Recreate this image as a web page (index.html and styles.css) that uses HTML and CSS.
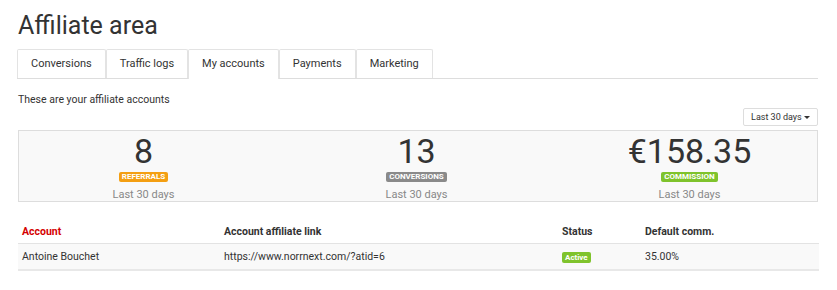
FILE: index.html
```html
<!DOCTYPE html>
<html lang="en">
<head>
  <meta charset="UTF-8">
  <title>Affiliate area</title>
  <link rel="stylesheet" href="styles.css">
</head>
<body>

  <!-- Page header -->
  <h1 class="page-title">Affiliate area</h1>

  <!-- Tabs -->
  <ul class="tabs">
    <li class="tab">Conversions</li>
    <li class="tab">Traffic logs</li>
    <li class="tab active">My accounts</li>
    <li class="tab">Payments</li>
    <li class="tab">Marketing</li>
  </ul>

  <p class="intro">These are your affiliate accounts</p>

  <div class="toolbar">
    <button class="range-btn">Last 30 days <span class="caret"></span></button>
  </div>

  <!-- Stats -->
  <div class="stats">
    <div class="stats-row">
      <div class="stat">
        <div class="stat-value">8</div>
        <span class="badge badge-orange">Referrals</span>
        <div class="stat-period">Last 30 days</div>
      </div>
      <div class="stat">
        <div class="stat-value">13</div>
        <span class="badge badge-grey">Conversions</span>
        <div class="stat-period">Last 30 days</div>
      </div>
      <div class="stat">
        <div class="stat-value">€158.35</div>
        <span class="badge badge-green">Commission</span>
        <div class="stat-period">Last 30 days</div>
      </div>
    </div>
  </div>

  <!-- Accounts -->
  <table class="accounts">
    <thead>
      <tr>
        <th class="col-account sorted">Account</th>
        <th class="col-link">Account affiliate link</th>
        <th class="col-status">Status</th>
        <th>Default comm.</th>
      </tr>
    </thead>
    <tbody>
      <tr>
        <td>Antoine Bouchet</td>
        <td>https://www.norrnext.com/?atid=6</td>
        <td><span class="label-active">Active</span></td>
        <td>35.00%</td>
      </tr>
    </tbody>
  </table>

</body>
</html>
```

FILE: styles.css
```css
/* Page base */
body {
  margin: 0;
  padding: 0 19px 0 17px;
  font-family: Roboto, "Liberation Sans", Arial, sans-serif;
  color: #333;
  background: #fff;
}

.page-title {
  margin: 0;
  padding: 9px 0 0 1px;
  font-size: 25px;
  font-weight: 400;
  line-height: 34px;
  color: #333;
}

/* Tabs */
.tabs {
  list-style: none;
  margin: 6px 0 0;
  padding: 0;
  display: flex;
  border-bottom: 1px solid #ddd;
}

.tab {
  height: 28px;
  line-height: 28px;
  padding: 0 13px;
  font-size: 11px;
  border: 1px solid #e3e3e3;
  border-bottom: none;
  margin-bottom: -1px;
  background: #fff;
  border-radius: 2px 2px 0 0;
}

.tab.active {
  height: 29px;
  padding: 0 13px;
}

.intro {
  margin: 14px 0 0 1px;
  font-size: 10.5px;
  line-height: 14px;
}

/* Date range button */
.toolbar {
  display: flex;
  justify-content: flex-end;
  margin-top: 1px;
}

.range-btn {
  font-family: inherit;
  font-size: 9px;
  color: #333;
  background: #fff;
  border: 1px solid #ddd;
  border-radius: 2px;
  height: 18px;
  padding: 0 7px;
}

.caret {
  display: inline-block;
  width: 0;
  height: 0;
  border-left: 3px solid transparent;
  border-right: 3px solid transparent;
  border-top: 3px solid #333;
  vertical-align: middle;
}

/* Stats box */
.stats {
  margin: 4px 0 0 1px;
  background: #f9f9f9;
  border: 1px solid #ddd;
  height: 70px;
}

.stats-row {
  display: grid;
  grid-template-columns: 1fr 1fr 1fr;
  margin: 0 -9px 0 -12px;
}

.stat {
  text-align: center;
}

.stat-value {
  font-size: 34px;
  line-height: 34px;
  margin-top: 3px;
  color: #333;
}

.badge {
  display: inline-block;
  font-size: 8px;
  font-weight: 700;
  text-transform: uppercase;
  color: #fff;
  padding: 0 3px;
  line-height: 10px;
  border-radius: 2px;
  vertical-align: top;
  margin-top: 4px;
}

.badge-orange {
  background: #f49f12;
}

.badge-grey {
  background: #8a8a8a;
}

.badge-green {
  background: #7fc32c;
}

.stat-period {
  font-size: 11px;
  line-height: 15px;
  color: #888;
  margin-top: 0;
}

/* Accounts table */
.accounts {
  width: 801px;
  margin: 18px 0 0 1px;
  border-collapse: collapse;
  font-size: 10.5px;
}

.accounts th {
  text-align: left;
  font-weight: 700;
  padding: 0 4px;
  height: 23px;
  border-bottom: 1px solid #e3e3e3;
  color: #333;
}

.accounts th.sorted {
  color: #d40000;
}

.accounts td {
  padding: 0 4px;
  height: 25px;
  background: #f9f9f9;
  border-bottom: 2px solid #e8e8e8;
}

.col-account {
  width: 194px;
}

.col-link {
  width: 330px;
}

.col-status {
  width: 75px;
}

.label-active {
  display: inline-block;
  background: #7fc32c;
  color: #fff;
  font-size: 8px;
  font-weight: 700;
  padding: 0 3px;
  line-height: 11px;
  border-radius: 2px;
}
```
